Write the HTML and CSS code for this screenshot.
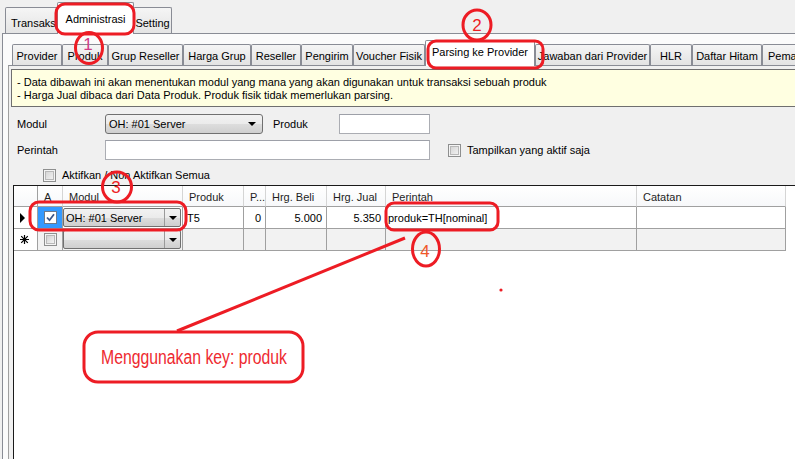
FILE: index.html
```html
<!DOCTYPE html>
<html>
<head>
<meta charset="utf-8">
<link rel="stylesheet" href="styles.css">
</head>
<body>
<div class="app">
  <div class="outer-strip">
    <div class="otab w-trans">Transaksi</div>
    <div class="otab sel w-admin">Administrasi</div>
    <div class="otab w-set">Setting</div>
  </div>
  <div class="outer-panel">
    <div class="inner-strip">
      <div class="itab" style="width:50px">Provider</div>
      <div class="itab" style="width:46px">Produk</div>
      <div class="itab" style="width:75px">Grup Reseller</div>
      <div class="itab" style="width:68px">Harga Grup</div>
      <div class="itab" style="width:50px">Reseller</div>
      <div class="itab" style="width:52px">Pengirim</div>
      <div class="itab" style="width:72px">Voucher Fisik</div>
      <div class="itab sel" style="width:110px">Parsing ke Provider</div>
      <div class="itab" style="width:115px">Jawaban dari Provider</div>
      <div class="itab" style="width:42px">HLR</div>
      <div class="itab" style="width:70px">Daftar Hitam</div>
      <div class="itab left" style="width:90px">Pemakaian</div>
    </div>
    <div class="inner-panel">
      <div class="info">
        <div>- Data dibawah ini akan menentukan modul yang mana yang akan digunakan untuk transaksi sebuah produk</div>
        <div>- Harga Jual dibaca dari Data Produk. Produk fisik tidak memerlukan parsing.</div>
      </div>
      <div class="form">
        <div class="frow">
          <div class="lbl">Modul</div>
          <div class="combo"><span class="ctext">OH: #01 Server</span><span class="arrow"></span></div>
          <div class="lbl2">Produk</div>
          <div class="tbox small"></div>
        </div>
        <div class="frow r2">
          <div class="lbl">Perintah</div>
          <div class="tbox wide"></div>
          <div class="chk ml"></div>
          <div class="chklbl">Tampilkan yang aktif saja</div>
        </div>
        <div class="frow r3">
          <div class="chk"></div>
          <div class="chklbl">Aktifkan / Non Aktifkan Semua</div>
        </div>
      </div>
      <div class="grid">
        <div class="dg">
          <div class="hc corner"></div>
          <div class="hc">A</div>
          <div class="hc">Modul</div>
          <div class="hc">Produk</div>
          <div class="hc">P...</div>
          <div class="hc">Hrg. Beli</div>
          <div class="hc">Hrg. Jual</div>
          <div class="hc">Perintah</div>
          <div class="hc">Catatan</div>

          <div class="rh"><svg width="6" height="10" viewBox="0 0 6 10"><path d="M0 0 L5 5 L0 10 Z" fill="#000"/></svg></div>
          <div class="c center selcell"><svg width="13" height="13" viewBox="0 0 13 13"><rect x="0.5" y="0.5" width="12" height="12" fill="#fff" stroke="#6d7a8c"/><path d="M3 6.5 L5.5 9.2 L10 3.3" stroke="#3c5688" stroke-width="1.8" fill="none"/></svg></div>
          <div class="c cc"><div class="gcombo"><span class="gtext">OH: #01 Server</span><span class="gbtn"><span class="arrow"></span></span></div></div>
          <div class="c">T5</div>
          <div class="c right">0</div>
          <div class="c right">5.000</div>
          <div class="c right">5.350</div>
          <div class="c edit">produk=TH[nominal]</div>
          <div class="c"></div>

          <div class="rh"><svg width="9" height="9" viewBox="0 0 9 9"><path d="M4.5 0 V9 M0 4.5 H9 M1.2 1.2 L7.8 7.8 M7.8 1.2 L1.2 7.8" stroke="#000" stroke-width="1.2"/></svg></div>
          <div class="c center nr"><svg width="13" height="13" viewBox="0 0 13 13"><defs><linearGradient id="cg" x1="0" y1="0" x2="1" y2="1"><stop offset="0" stop-color="#cfcfcf"/><stop offset="1" stop-color="#f7f7f7"/></linearGradient></defs><rect x="0.5" y="0.5" width="12" height="12" fill="#f4f4f4" stroke="#8e8f8f"/><rect x="2.5" y="2.5" width="8" height="8" fill="url(#cg)" stroke="#b8b8b8"/></svg></div>
          <div class="c cc nr"><div class="gcombo"><span class="gtext"></span><span class="gbtn"><span class="arrow"></span></span></div></div>
          <div class="c nr"></div>
          <div class="c nr"></div>
          <div class="c nr"></div>
          <div class="c nr"></div>
          <div class="c nr"></div>
          <div class="c nr"></div>
        </div>
      </div>
    </div>
  </div>

  <svg class="annot" width="795" height="459" viewBox="0 0 795 459">
    <g fill="none" stroke="#ed1c24" stroke-width="3">
      <rect x="56" y="4" width="78" height="30" rx="9"/>
      <ellipse cx="89" cy="48" rx="13.5" ry="15.5"/>
      <ellipse cx="477" cy="25" rx="14" ry="15"/>
      <rect x="428" y="41" width="115" height="27" rx="8"/>
      <ellipse cx="117" cy="187" rx="14.5" ry="15"/>
      <rect x="30" y="202" width="156" height="28" rx="9"/>
      <rect x="386" y="203" width="112" height="27" rx="8"/>
      <ellipse cx="426" cy="249" rx="13.5" ry="17"/>
      <line x1="405" y1="238" x2="177" y2="331"/>
      <rect x="84" y="332" width="219" height="50" rx="14"/>
    </g>
    <circle cx="501" cy="290" r="1.6" fill="#ed1c24"/>
    <text x="88" y="50" class="num" fill="#d03a86">1</text>
    <text x="477" y="31" class="num" fill="#ed1c24">2</text>
    <text x="116" y="193" class="num" fill="#ed1c24">3</text>
    <text x="425" y="257" class="num" fill="#f0582a">4</text>
    <text x="101" y="364" class="callout" textLength="186" lengthAdjust="spacingAndGlyphs">Menggunakan key: produk</text>
  </svg>
</div>
</body>
</html>
```
FILE: styles.css
```css
* { box-sizing: border-box; }
html, body { margin: 0; padding: 0; }
body {
  width: 795px;
  height: 459px;
  overflow: hidden;
  background: #f0f0f0;
  font-family: "Liberation Sans", Arial, sans-serif;
  font-size: 11px;
  color: #000;
}
.app { position: relative; width: 830px; height: 459px; }

/* outer tabs */
.outer-strip {
  height: 33px;
  display: flex;
  align-items: flex-end;
  padding-left: 5px;
}
.otab {
  height: 26px;
  border: 1px solid #898c95;
  border-bottom: none;
  background: linear-gradient(#f5f5f5, #e4e4e4);
  display: flex;
  align-items: center;
  justify-content: center;
  padding-top: 4px;
  white-space: nowrap;
  overflow: hidden;
  border-radius: 2px 2px 0 0;
}
.otab.sel {
  height: 32px;
  margin-bottom: -1px;
  background: #fff;
  position: relative;
  z-index: 1;
  padding-top: 0;
}
.w-trans { width: 54px; justify-content: flex-start; padding-left: 5px; }
.w-admin { width: 77px; margin-left: -2px; }
.w-set { width: 39px; margin-left: -1px; }

.outer-panel {
  margin-left: 2px;
  height: 426px;
  border-top: 1px solid #898c95;
  border-left: 1px solid #898c95;
  background: #fbfbfb;
}

/* inner tabs */
.inner-strip {
  height: 31px;
  display: flex;
  align-items: flex-end;
  padding-left: 9px;
}
.itab {
  flex: none;
  height: 21px;
  border: 1px solid #898c95;
  border-bottom: none;
  background: linear-gradient(#f5f5f5, #e3e3e3);
  display: flex;
  align-items: center;
  justify-content: center;
  padding-top: 1px;
  white-space: nowrap;
  overflow: hidden;
  border-radius: 2px 2px 0 0;
}
.itab.left { justify-content: flex-start; padding-left: 5px; }
.itab.sel {
  height: 26px;
  margin-bottom: -1px;
  background: #fff;
  position: relative;
  z-index: 1;
  padding-top: 0;
  padding-bottom: 4px;
}

.inner-panel {
  margin-left: 5px;
  height: 400px;
  border-top: 1px solid #898c95;
  border-left: 1px solid #a0a0a0;
  background: #f0f0f0;
  padding: 3px 0 0 2px;
}

.info {
  height: 38px;
  border: 1px solid #6f6f6f;
  background: #ffffe1;
  padding: 6px 0 0 5px;
  line-height: 13px;
  white-space: nowrap;
}

/* form */
.form { padding: 7px 0 0 6px; }
.frow { display: flex; align-items: center; height: 20px; }
.frow.r2 { margin-top: 6px; }
.frow.r3 { margin-top: 8px; height: 14px; padding-left: 26px; }
.lbl { width: 88px; }
.lbl2 { width: 66px; margin-left: 10px; }
.combo {
  width: 158px;
  height: 20px;
  border: 1px solid #707070;
  border-radius: 3px;
  background: linear-gradient(#f2f2f2, #ebebeb 50%, #dddddd 51%, #cfcfcf);
  display: flex;
  align-items: center;
  padding: 0 6px 0 3px;
}
.ctext { flex: 1; }
.arrow {
  width: 0;
  height: 0;
  border-left: 4px solid transparent;
  border-right: 4px solid transparent;
  border-top: 4px solid #000;
}
.tbox {
  height: 20px;
  background: #fff;
  border: 1px solid #abadb3;
  border-top-color: #9da0a8;
}
.tbox.small { width: 91px; }
.tbox.wide { width: 325px; }
.chk {
  width: 13px;
  height: 13px;
  border: 1px solid #8e8f8f;
  background: #f4f4f4;
  box-shadow: inset 0 0 0 1px #f4f4f4, inset 0 0 0 2px #b8b8b8;
  background-image: linear-gradient(135deg, #cfcfcf, #f8f8f8);
}
.chk.ml { margin-left: 18px; }
.chklbl { margin-left: 6px; }

/* data grid */
.grid {
  margin: 3px 0 0 2px;
  height: 290px;
  border-top: 1px solid #1a1a1a;
  border-left: 1px solid #1a1a1a;
  background: #fff;
}
.dg {
  display: grid;
  grid-template-columns: 24px 25px 120px 61px 22px 61px 59px 251px 149px;
  grid-template-rows: 21px 22px 22px;
  width: 772px;
}
.hc {
  border-right: 1px solid #d5d5d5;
  border-bottom: 1px solid #a0a0a0;
  background: linear-gradient(#ffffff, #f7f8fa);
  padding: 2px 0 0 6px;
  display: flex;
  align-items: center;
  color: #1e1e1e;
  white-space: nowrap;
  overflow: hidden;
}
.hc.corner { border-right-color: #a0a0a0; }
.rh {
  border-right: 1px solid #a0a0a0;
  border-bottom: 1px solid #a0a0a0;
  background: #fff;
  display: flex;
  align-items: center;
  padding-left: 6px;
}
.c {
  border-right: 1px solid #a0a0a0;
  border-bottom: 1px solid #a0a0a0;
  display: flex;
  align-items: center;
  padding: 0 4px;
  white-space: nowrap;
  overflow: hidden;
  background: #fff;
}
.c.nr { background: #f2f2f2; }
.c.right { justify-content: flex-end; }
.c.center { justify-content: center; }
.c.edit { padding-left: 2px; }
.c.selcell { background: #3399ff; }
.c.cc { padding: 1px 1px 1px 0; }
.gcombo {
  width: 100%;
  height: 100%;
  border: 1px solid #707070;
  border-radius: 2px;
  background: linear-gradient(#f2f2f2, #ebebeb 50%, #dddddd 51%, #cfcfcf);
  display: flex;
  align-items: center;
}
.gtext { flex: 1; padding-left: 2px; }
.gbtn {
  width: 16px;
  height: 100%;
  border-left: 1px solid #9a9a9a;
  display: flex;
  align-items: center;
  justify-content: center;
}

/* annotation overlay */
.annot {
  position: absolute;
  top: 0;
  left: 0;
  pointer-events: none;
  z-index: 5;
}
.num {
  font-family: "Liberation Sans", Arial, sans-serif;
  font-size: 17px;
  text-anchor: middle;
}
.callout {
  font-family: "Liberation Sans", Arial, sans-serif;
  font-size: 19.5px;
  fill: #ee2a30;
}
```
